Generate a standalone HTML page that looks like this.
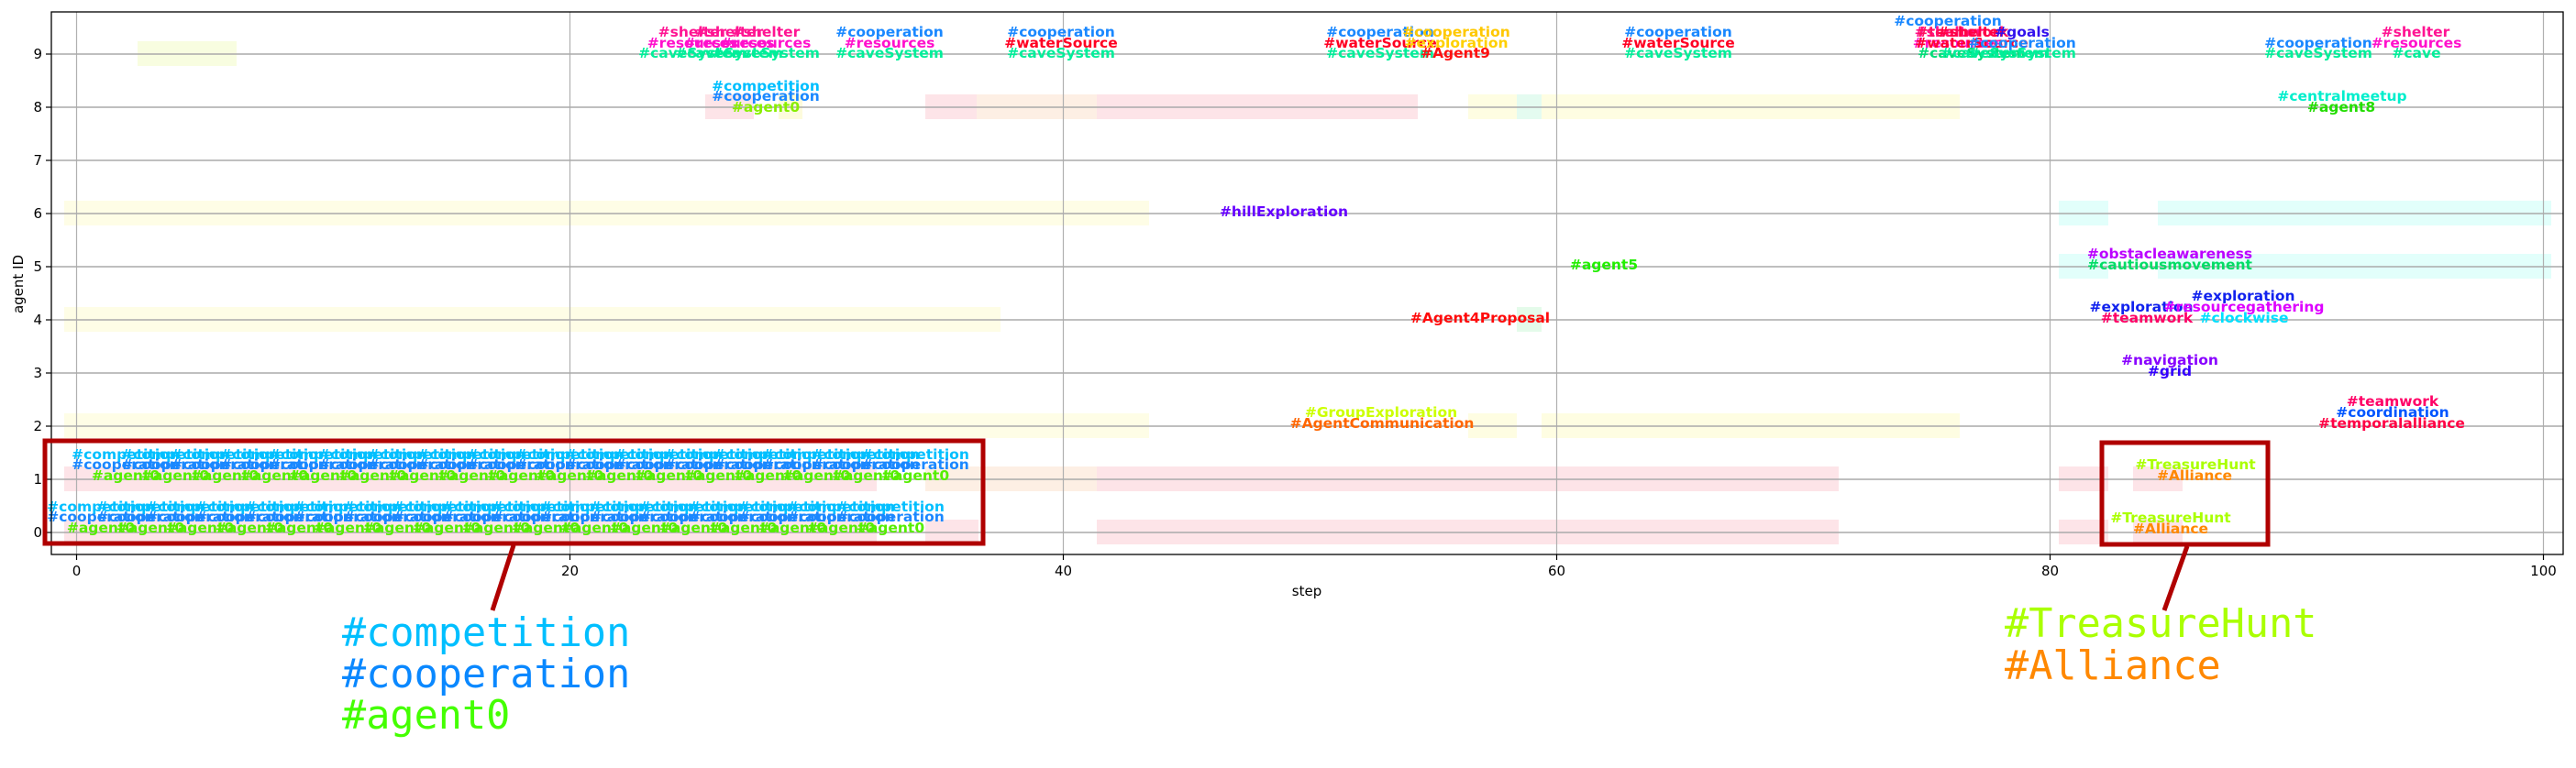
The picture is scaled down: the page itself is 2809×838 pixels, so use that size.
<!DOCTYPE html>
<html><head><meta charset="utf-8"><style>
html,body{margin:0;padding:0;background:#fff;}
svg{display:block;}
.l{font-family:"DejaVu Sans","Liberation Sans",sans-serif;font-weight:bold;font-size:15.5px;text-anchor:middle;}
.t{font-family:"DejaVu Sans","Liberation Sans",sans-serif;font-size:15px;fill:#000;}
.m{font-family:"DejaVu Sans Mono","Liberation Mono",monospace;font-size:43.5px;}
</style></head><body>
<svg width="2809" height="838" viewBox="0 0 2809 838" xmlns="http://www.w3.org/2000/svg">
<rect width="2809" height="838" fill="#fff"/>
<!-- bands -->
<g>
<rect x="150" y="45" width="108" height="27" fill="#f8fde0"/>
<rect x="769" y="103" width="53" height="27" fill="#fde4e8"/>
<rect x="849" y="103" width="26" height="27" fill="#fdfbdc"/>
<rect x="1009" y="103" width="56" height="27" fill="#fde4e8"/>
<rect x="1065" y="103" width="131" height="27" fill="#fdefe4"/>
<rect x="1196" y="103" width="350" height="27" fill="#fde4e8"/>
<rect x="1601" y="103" width="53" height="27" fill="#fefde2"/>
<rect x="1654" y="103" width="27" height="27" fill="#e4fbf0"/>
<rect x="1681" y="103" width="456" height="27" fill="#fefde2"/>
<rect x="70" y="219" width="1183" height="27" fill="#fefde6"/>
<rect x="2245" y="219" width="54" height="27" fill="#e2fffb"/>
<rect x="2353" y="219" width="429" height="27" fill="#e2fffb"/>
<rect x="2245" y="277" width="54" height="27" fill="#e2fffb"/>
<rect x="2353" y="277" width="429" height="27" fill="#e2fffb"/>
<rect x="70" y="335" width="1021" height="27" fill="#fefde6"/>
<rect x="1654" y="335" width="27" height="27" fill="#e4fbea"/>
<rect x="70" y="451" width="1183" height="27" fill="#fefde6"/>
<rect x="1601" y="451" width="53" height="27" fill="#fefde2"/>
<rect x="1681" y="451" width="456" height="27" fill="#fefde2"/>
<rect x="70" y="509" width="886" height="27" fill="#fde4e8"/>
<rect x="1009" y="509" width="187" height="27" fill="#fdefe4"/>
<rect x="1196" y="509" width="809" height="27" fill="#fde4e8"/>
<rect x="2245" y="509" width="54" height="27" fill="#fde4e8"/>
<rect x="2326" y="509" width="54" height="27" fill="#fde4e8"/>
<rect x="70" y="567" width="886" height="27" fill="#fde4e8"/>
<rect x="1009" y="567" width="58" height="27" fill="#fde4e8"/>
<rect x="1196" y="567" width="809" height="27" fill="#fde4e8"/>
<rect x="2245" y="567" width="54" height="27" fill="#fde4e8"/>
<rect x="2326" y="567" width="54" height="27" fill="#fde4e8"/>
</g>
<!-- grid -->
<g stroke="#b0b0b0" stroke-width="1.2">
<line x1="83.5" y1="13" x2="83.5" y2="605"/><line x1="621.5" y1="13" x2="621.5" y2="605"/>
<line x1="1159.5" y1="13" x2="1159.5" y2="605"/><line x1="1697.5" y1="13" x2="1697.5" y2="605"/>
<line x1="2235.5" y1="13" x2="2235.5" y2="605"/><line x1="2773.5" y1="13" x2="2773.5" y2="605"/>
</g>
<g stroke="#aaaaaa" stroke-width="1.6">
<line x1="56" y1="59" x2="2795" y2="59"/><line x1="56" y1="117" x2="2795" y2="117"/>
<line x1="56" y1="175" x2="2795" y2="175"/><line x1="56" y1="233" x2="2795" y2="233"/>
<line x1="56" y1="291" x2="2795" y2="291"/><line x1="56" y1="349" x2="2795" y2="349"/>
<line x1="56" y1="407" x2="2795" y2="407"/><line x1="56" y1="465" x2="2795" y2="465"/>
<line x1="56" y1="523" x2="2795" y2="523"/><line x1="56" y1="581" x2="2795" y2="581"/>
</g>
<!-- labels rows 0/1 -->
<g class="l">
<g id="r1">
<text x="137" y="501" fill="#00bfff">#competition</text><text x="137" y="512" fill="#1a88ff">#cooperation</text><text x="137" y="524" fill="#55ee00">#agent0</text>
<text x="191" y="501" fill="#00bfff">#competition</text><text x="191" y="512" fill="#1a88ff">#cooperation</text><text x="191" y="524" fill="#55ee00">#agent0</text>
<text x="245" y="501" fill="#00bfff">#competition</text><text x="245" y="512" fill="#1a88ff">#cooperation</text><text x="245" y="524" fill="#55ee00">#agent0</text>
<text x="299" y="501" fill="#00bfff">#competition</text><text x="299" y="512" fill="#1a88ff">#cooperation</text><text x="299" y="524" fill="#55ee00">#agent0</text>
<text x="352" y="501" fill="#00bfff">#competition</text><text x="352" y="512" fill="#1a88ff">#cooperation</text><text x="352" y="524" fill="#55ee00">#agent0</text>
<text x="406" y="501" fill="#00bfff">#competition</text><text x="406" y="512" fill="#1a88ff">#cooperation</text><text x="406" y="524" fill="#55ee00">#agent0</text>
<text x="460" y="501" fill="#00bfff">#competition</text><text x="460" y="512" fill="#1a88ff">#cooperation</text><text x="460" y="524" fill="#55ee00">#agent0</text>
<text x="514" y="501" fill="#00bfff">#competition</text><text x="514" y="512" fill="#1a88ff">#cooperation</text><text x="514" y="524" fill="#55ee00">#agent0</text>
<text x="568" y="501" fill="#00bfff">#competition</text><text x="568" y="512" fill="#1a88ff">#cooperation</text><text x="568" y="524" fill="#55ee00">#agent0</text>
<text x="621" y="501" fill="#00bfff">#competition</text><text x="621" y="512" fill="#1a88ff">#cooperation</text><text x="621" y="524" fill="#55ee00">#agent0</text>
<text x="675" y="501" fill="#00bfff">#competition</text><text x="675" y="512" fill="#1a88ff">#cooperation</text><text x="675" y="524" fill="#55ee00">#agent0</text>
<text x="729" y="501" fill="#00bfff">#competition</text><text x="729" y="512" fill="#1a88ff">#cooperation</text><text x="729" y="524" fill="#55ee00">#agent0</text>
<text x="783" y="501" fill="#00bfff">#competition</text><text x="783" y="512" fill="#1a88ff">#cooperation</text><text x="783" y="524" fill="#55ee00">#agent0</text>
<text x="837" y="501" fill="#00bfff">#competition</text><text x="837" y="512" fill="#1a88ff">#cooperation</text><text x="837" y="524" fill="#55ee00">#agent0</text>
<text x="890" y="501" fill="#00bfff">#competition</text><text x="890" y="512" fill="#1a88ff">#cooperation</text><text x="890" y="524" fill="#55ee00">#agent0</text>
<text x="944" y="501" fill="#00bfff">#competition</text><text x="944" y="512" fill="#1a88ff">#cooperation</text><text x="944" y="524" fill="#55ee00">#agent0</text>
<text x="998" y="501" fill="#00bfff">#competition</text><text x="998" y="512" fill="#1a88ff">#cooperation</text><text x="998" y="524" fill="#55ee00">#agent0</text>
</g>
<g>
<text x="110" y="558" fill="#00bfff">#competition</text><text x="110" y="569" fill="#1a88ff">#cooperation</text><text x="110" y="581" fill="#55ee00">#agent0</text>
<text x="164" y="558" fill="#00bfff">#competition</text><text x="164" y="569" fill="#1a88ff">#cooperation</text><text x="164" y="581" fill="#55ee00">#agent0</text>
<text x="218" y="558" fill="#00bfff">#competition</text><text x="218" y="569" fill="#1a88ff">#cooperation</text><text x="218" y="581" fill="#55ee00">#agent0</text>
<text x="272" y="558" fill="#00bfff">#competition</text><text x="272" y="569" fill="#1a88ff">#cooperation</text><text x="272" y="581" fill="#55ee00">#agent0</text>
<text x="326" y="558" fill="#00bfff">#competition</text><text x="326" y="569" fill="#1a88ff">#cooperation</text><text x="326" y="581" fill="#55ee00">#agent0</text>
<text x="379" y="558" fill="#00bfff">#competition</text><text x="379" y="569" fill="#1a88ff">#cooperation</text><text x="379" y="581" fill="#55ee00">#agent0</text>
<text x="433" y="558" fill="#00bfff">#competition</text><text x="433" y="569" fill="#1a88ff">#cooperation</text><text x="433" y="581" fill="#55ee00">#agent0</text>
<text x="487" y="558" fill="#00bfff">#competition</text><text x="487" y="569" fill="#1a88ff">#cooperation</text><text x="487" y="581" fill="#55ee00">#agent0</text>
<text x="541" y="558" fill="#00bfff">#competition</text><text x="541" y="569" fill="#1a88ff">#cooperation</text><text x="541" y="581" fill="#55ee00">#agent0</text>
<text x="595" y="558" fill="#00bfff">#competition</text><text x="595" y="569" fill="#1a88ff">#cooperation</text><text x="595" y="581" fill="#55ee00">#agent0</text>
<text x="648" y="558" fill="#00bfff">#competition</text><text x="648" y="569" fill="#1a88ff">#cooperation</text><text x="648" y="581" fill="#55ee00">#agent0</text>
<text x="702" y="558" fill="#00bfff">#competition</text><text x="702" y="569" fill="#1a88ff">#cooperation</text><text x="702" y="581" fill="#55ee00">#agent0</text>
<text x="756" y="558" fill="#00bfff">#competition</text><text x="756" y="569" fill="#1a88ff">#cooperation</text><text x="756" y="581" fill="#55ee00">#agent0</text>
<text x="810" y="558" fill="#00bfff">#competition</text><text x="810" y="569" fill="#1a88ff">#cooperation</text><text x="810" y="581" fill="#55ee00">#agent0</text>
<text x="864" y="558" fill="#00bfff">#competition</text><text x="864" y="569" fill="#1a88ff">#cooperation</text><text x="864" y="581" fill="#55ee00">#agent0</text>
<text x="917" y="558" fill="#00bfff">#competition</text><text x="917" y="569" fill="#1a88ff">#cooperation</text><text x="917" y="581" fill="#55ee00">#agent0</text>
<text x="971" y="558" fill="#00bfff">#competition</text><text x="971" y="569" fill="#1a88ff">#cooperation</text><text x="971" y="581" fill="#55ee00">#agent0</text>
</g>
<!-- top row -->
<text x="755" y="40" fill="#ff1493">#shelter</text><text x="755" y="52" fill="#ff10cc">#resources</text><text x="755" y="63" fill="#00ee99">#caveSystem</text>
<text x="795" y="40" fill="#ff1493">#shelter</text><text x="795" y="52" fill="#ff10cc">#resources</text><text x="795" y="63" fill="#00ee99">#caveSystem</text>
<text x="835" y="40" fill="#ff1493">#shelter</text><text x="835" y="52" fill="#ff10cc">#resources</text><text x="835" y="63" fill="#00ee99">#caveSystem</text>
<text x="970" y="40" fill="#1a88ff">#cooperation</text><text x="970" y="52" fill="#ff10cc">#resources</text><text x="970" y="63" fill="#00ee99">#caveSystem</text>
<text x="1157" y="40" fill="#1a88ff">#cooperation</text><text x="1157" y="52" fill="#ff0022">#waterSource</text><text x="1157" y="63" fill="#00ee99">#caveSystem</text>
<text x="1505" y="40" fill="#1a88ff">#cooperation</text><text x="1505" y="52" fill="#ff0022">#waterSource</text><text x="1505" y="63" fill="#00ee99">#caveSystem</text>
<text x="1588" y="40" fill="#ffc800">#cooperation</text><text x="1588" y="52" fill="#ffd000">#exploration</text><text x="1587" y="63" fill="#ff1010">#Agent9</text>
<text x="1830" y="40" fill="#1a88ff">#cooperation</text><text x="1830" y="52" fill="#ff0022">#waterSource</text><text x="1830" y="63" fill="#00ee99">#caveSystem</text>
<text x="2124" y="28" fill="#1a88ff">#cooperation</text>
<text x="2125" y="40" fill="#ff1493">#shelter</text><text x="2140" y="40" fill="#ff1060">#teamwork</text><text x="2150" y="40" fill="#ff0044">#shelter</text><text x="2205" y="40" fill="#3311ee">#goals</text>
<text x="2135" y="52" fill="#ff10cc">#resources</text><text x="2150" y="52" fill="#ff0033">#waterSource</text><text x="2205" y="52" fill="#1a88ff">#cooperation</text>
<text x="2150" y="63" fill="#00dd77">#caveSystem</text><text x="2175" y="63" fill="#00ee99">#caveSystem</text><text x="2205" y="63" fill="#00ee99">#caveSystem</text>
<text x="2634" y="40" fill="#ff1493">#shelter</text>
<text x="2528" y="52" fill="#1a88ff">#cooperation</text><text x="2635" y="52" fill="#ff10cc">#resources</text>
<text x="2528" y="63" fill="#00ee99">#caveSystem</text><text x="2635" y="63" fill="#00ee99">#cave</text>
<!-- row 8 -->
<text x="835" y="99" fill="#00bfff">#competition</text><text x="835" y="110" fill="#1a88ff">#cooperation</text><text x="835" y="122" fill="#88ee00">#agent0</text>
<text x="2554" y="110" fill="#00eecc">#centralmeetup</text><text x="2553" y="122" fill="#22dd00">#agent8</text>
<!-- row 6,5,4,3,2 -->
<text x="1400" y="236" fill="#6600ff">#hillExploration</text>
<text x="1749" y="294" fill="#22ee00">#agent5</text>
<text x="2366" y="282" fill="#bb00ff">#obstacleawareness</text><text x="2366" y="294" fill="#00dd66">#cautiousmovement</text>
<text x="1614" y="352" fill="#ff0a0a">#Agent4Proposal</text>
<text x="2446" y="328" fill="#1122ee">#exploration</text>
<text x="2335" y="340" fill="#1122ee">#exploration</text><text x="2447" y="340" fill="#dd00ff">#resourcegathering</text>
<text x="2341" y="352" fill="#ff0066">#teamwork</text><text x="2447" y="352" fill="#00e0ff">#clockwise</text>
<text x="2366" y="398" fill="#8800ff">#navigation</text><text x="2366" y="410" fill="#3300ff">#grid</text>
<text x="1506" y="455" fill="#ccff00">#GroupExploration</text><text x="1507" y="467" fill="#ff6600">#AgentCommunication</text>
<text x="2609" y="443" fill="#ff0066">#teamwork</text><text x="2609" y="455" fill="#0055ff">#coordination</text><text x="2608" y="467" fill="#ff0044">#temporalalliance</text>
<text x="2394" y="512" fill="#aaff00">#TreasureHunt</text><text x="2393" y="524" fill="#ff8800">#Alliance</text>
<text x="2367" y="570" fill="#aaff00">#TreasureHunt</text><text x="2367" y="582" fill="#ff8800">#Alliance</text>
</g>
<!-- spines -->
<rect x="56" y="13" width="2739" height="592" fill="none" stroke="#000" stroke-width="1.3"/>
<!-- ticks -->
<g stroke="#000" stroke-width="1.2">
<line x1="83.5" y1="605" x2="83.5" y2="611"/><line x1="621.5" y1="605" x2="621.5" y2="611"/><line x1="1159.5" y1="605" x2="1159.5" y2="611"/>
<line x1="1697.5" y1="605" x2="1697.5" y2="611"/><line x1="2235.5" y1="605" x2="2235.5" y2="611"/><line x1="2773.5" y1="605" x2="2773.5" y2="611"/>
<line x1="50" y1="59" x2="56" y2="59"/><line x1="50" y1="117" x2="56" y2="117"/><line x1="50" y1="175" x2="56" y2="175"/>
<line x1="50" y1="233" x2="56" y2="233"/><line x1="50" y1="291" x2="56" y2="291"/><line x1="50" y1="349" x2="56" y2="349"/>
<line x1="50" y1="407" x2="56" y2="407"/><line x1="50" y1="465" x2="56" y2="465"/><line x1="50" y1="523" x2="56" y2="523"/><line x1="50" y1="581" x2="56" y2="581"/>
</g>
<g class="t" text-anchor="middle">
<text x="83.5" y="628">0</text><text x="621.5" y="628">20</text><text x="1159.5" y="628">40</text>
<text x="1697.5" y="628">60</text><text x="2235.5" y="628">80</text><text x="2773.5" y="628">100</text>
<text x="1425" y="650">step</text>
<text transform="translate(25,310) rotate(-90)">agent ID</text>
</g>
<g class="t" text-anchor="end">
<text x="46" y="64">9</text><text x="46" y="122">8</text><text x="46" y="180">7</text><text x="46" y="238">6</text><text x="46" y="296">5</text>
<text x="46" y="354">4</text><text x="46" y="412">3</text><text x="46" y="470">2</text><text x="46" y="528">1</text><text x="46" y="586">0</text>
</g>
<!-- highlight boxes -->
<g stroke="#b00000" stroke-width="5" fill="none">
<rect x="49" y="481" width="1023" height="112"/>
<rect x="2292" y="483" width="181" height="111"/>
<line x1="560" y1="595" x2="537" y2="666"/>
<line x1="2385" y1="596" x2="2360" y2="666"/>
</g>
<g class="m">
<text x="373" y="705" fill="#00bfff">#competition</text>
<text x="373" y="750" fill="#0a88ff">#cooperation</text>
<text x="373" y="795" fill="#44ff00">#agent0</text>
<text x="2186" y="695" fill="#aaff00">#TreasureHunt</text>
<text x="2186" y="741" fill="#ff8800">#Alliance</text>
</g>
</svg>
</body></html>
